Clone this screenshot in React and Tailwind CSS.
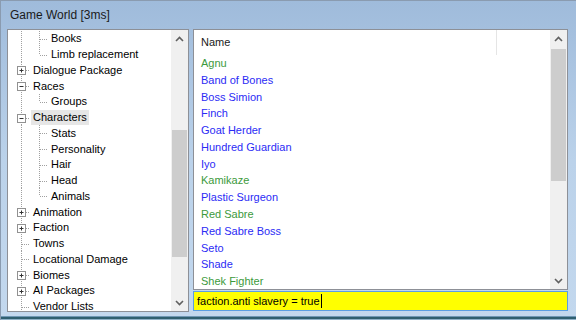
import React from "react";

const FONT = { fontFamily: '"Liberation Sans", Arial, sans-serif' };

const treeRows = [
  { text: "Books", level: 1 },
  { text: "Limb replacement", level: 1, last: true },
  { text: "Dialogue Package", level: 0, box: "+" },
  { text: "Races", level: 0, box: "-" },
  { text: "Groups", level: 1, last: true },
  { text: "Characters", level: 0, box: "-", selected: true },
  { text: "Stats", level: 1 },
  { text: "Personality", level: 1 },
  { text: "Hair", level: 1 },
  { text: "Head", level: 1 },
  { text: "Animals", level: 1, last: true },
  { text: "Animation", level: 0, box: "+" },
  { text: "Faction", level: 0, box: "+" },
  { text: "Towns", level: 0 },
  { text: "Locational Damage", level: 0 },
  { text: "Biomes", level: 0, box: "+" },
  { text: "AI Packages", level: 0, box: "+" },
  { text: "Vendor Lists", level: 0 },
];

const GREEN = "#3c9a3c";
const BLUE = "#2b2bf5";

const items = [
  ["Agnu", GREEN],
  ["Band of Bones", BLUE],
  ["Boss Simion", BLUE],
  ["Finch", BLUE],
  ["Goat Herder", BLUE],
  ["Hundred Guardian", BLUE],
  ["Iyo", BLUE],
  ["Kamikaze", GREEN],
  ["Plastic Surgeon", BLUE],
  ["Red Sabre", GREEN],
  ["Red Sabre Boss", BLUE],
  ["Seto", BLUE],
  ["Shade", BLUE],
  ["Shek Fighter", GREEN],
];

function Guides({ row }) {
  const dot = { stroke: "#a0a0a0", strokeWidth: 1, strokeDasharray: "1 1" };
  if (row.level === 0) {
    return (
      <svg width="23" height="16" className="shrink-0 overflow-visible">
        <line x1="13.5" y1="0" x2="13.5" y2="16" {...dot} />
        <line x1="14" y1="8.5" x2="22" y2="8.5" {...dot} />
        {row.box && (
          <g>
            <rect x="9.5" y="4.5" width="8" height="8" fill="#fff" stroke="#919191" />
            <line x1="11.5" y1="8.5" x2="15.5" y2="8.5" stroke="#333" />
            {row.box === "+" && <line x1="13.5" y1="6.5" x2="13.5" y2="10.5" stroke="#333" />}
          </g>
        )}
      </svg>
    );
  }
  return (
    <svg width="41" height="16" className="shrink-0 overflow-visible">
      <line x1="13.5" y1="0" x2="13.5" y2="16" {...dot} />
      <line x1="31.5" y1="0" x2="31.5" y2={row.last ? 8 : 16} {...dot} />
      <line x1="32" y1="8.5" x2="40" y2="8.5" {...dot} />
    </svg>
  );
}

function Chevron({ up }) {
  return (
    <svg width="9" height="6" viewBox="0 0 9 6">
      <path
        d={up ? "M1 5 L4.5 1.5 L8 5" : "M1 1 L4.5 4.5 L8 1"}
        fill="none"
        stroke="#606060"
        strokeWidth="1.6"
      />
    </svg>
  );
}

function ScrollBar({ thumbTop, thumbHeight }) {
  return (
    <div className="w-[17px] shrink-0 bg-[#f0f0f0] flex flex-col">
      <div className="h-[17px] flex items-center justify-center">
        <Chevron up />
      </div>
      <div className="flex-1 flex flex-col px-[1px]">
        <div style={{ height: thumbTop }} />
        <div className="bg-[#cdcdcd]" style={{ height: thumbHeight }} />
      </div>
      <div className="h-[17px] flex items-center justify-center">
        <Chevron />
      </div>
    </div>
  );
}

export default function App() {
  return (
    <div
      className="w-[576px] h-[320px] flex flex-col bg-gradient-to-b from-[#9fbbdb] via-[#bbd2ea] to-[#c3d8ee] border-t border-l border-[#8a9bb0] text-[11px] text-black overflow-hidden"
      style={FONT}
    >
      {/* Title */}
      <div className="h-[28px] flex items-center pl-[9px] text-[12px] text-[#1a1a1a]">
        Game World [3ms]
      </div>

      {/* Body */}
      <div className="flex gap-[4px] pl-[6px] pr-[8px] h-[283px]">
        {/* Tree */}
        <div className="w-[182px] border border-[#8d9097] bg-white flex">
          <div className="flex-1 overflow-hidden pt-[1px]">
            {treeRows.map((row, i) => (
              <div key={i} className="h-[15.75px] flex items-center whitespace-nowrap">
                <Guides row={row} />
                <span
                  className={`px-[2px] leading-[15px] ${row.selected ? "bg-[#e6e6e6]" : ""}`}
                >
                  {row.text}
                </span>
              </div>
            ))}
          </div>
          <ScrollBar thumbTop={83} thumbHeight={127} />
        </div>

        {/* List + filter */}
        <div className="flex-1 flex flex-col gap-[1px]">
          <div className="h-[261px] border border-[#8d9097] bg-white flex">
            <div className="flex-1 flex flex-col overflow-hidden">
              <div className="h-[25px] flex shrink-0">
                <div className="w-[303px] border-r border-[#e5e5e5] flex items-center pl-[7px] text-[#1a1a1a]">
                  Name
                </div>
              </div>
              {items.map(([name, color]) => (
                <div
                  key={name}
                  className="h-[16.77px] shrink-0 flex items-center pl-[7px]"
                  style={{ color }}
                >
                  {name}
                </div>
              ))}
            </div>
            <ScrollBar thumbTop={2} thumbHeight={132} />
          </div>
          <div className="h-[20px] border border-[#5b9ee2] bg-[#ffff00] flex items-center pl-[3px]">
            <span>faction.anti slavery = true</span>
            <span className="w-[1px] h-[14px] bg-black ml-[1px]" />
          </div>
        </div>
      </div>

      {/* Bottom frame */}
      <div className="flex-1 flex flex-col justify-end">
        <div className="h-[1px] bg-[#6f97b4]" />
        <div className="h-[2px] bg-[#2f5f70]" />
        <div className="h-[1px] bg-[#8fb1c8]" />
      </div>
    </div>
  );
}
